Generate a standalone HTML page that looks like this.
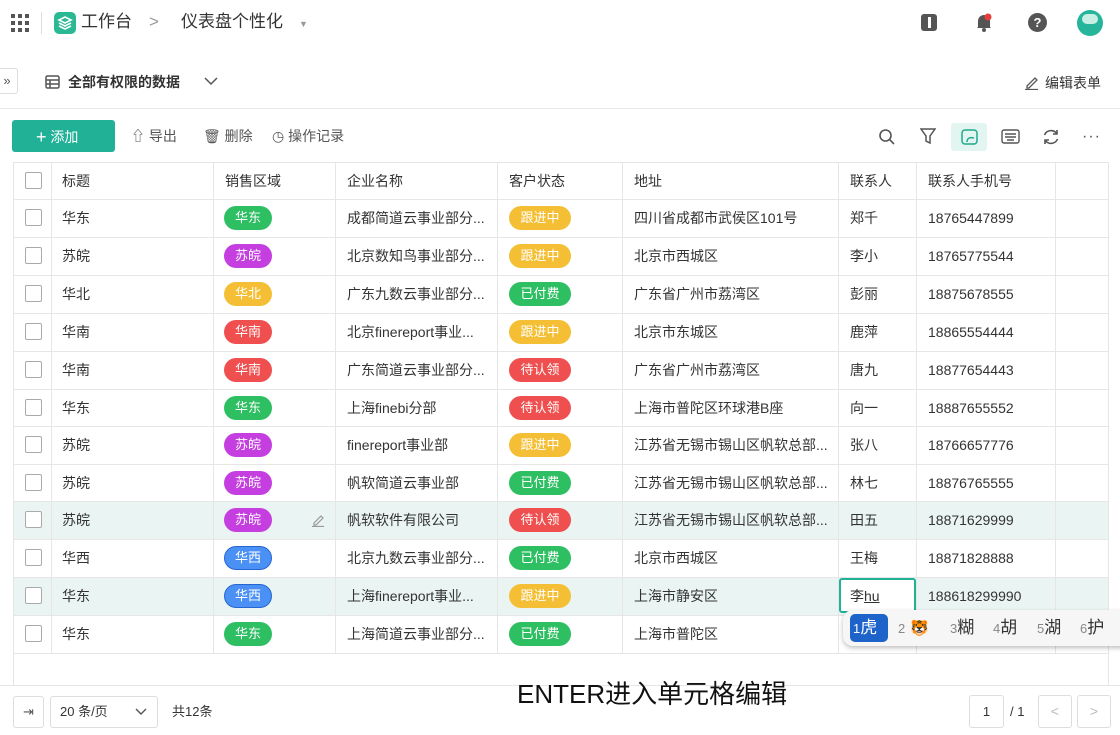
<!DOCTYPE html>
<html><head><meta charset="utf-8"><style>
*{box-sizing:border-box;margin:0;padding:0}
body{width:1120px;height:735px;overflow:hidden;background:#fff;font-family:"Liberation Sans","Noto Sans CJK SC",sans-serif;color:#333;position:relative;font-size:14px}
.a{position:absolute}
.t{position:absolute;white-space:nowrap;line-height:20px}
.tag{position:absolute;height:24px;border-radius:12px;color:#fff;font-size:13px;line-height:24px;text-align:center;width:48px}
.g{background:#2fbf63}.p{background:#c53ee0}.y{background:#f4bf35}.r{background:#ef4f4f}.b{background:#4b90f4;border:1.5px solid #2566d1;line-height:21px}
.st{width:62px}
.cb{position:absolute;left:25px;width:17px;height:17px;border:1px solid #aaa;border-radius:2px;background:#fff}
.vl{position:absolute;top:162px;height:492px;width:1px;background:#e6e6e6}
.hl{position:absolute;left:13px;width:1096px;height:1px;background:#e6e6e6}
.ic{color:#555}
</style></head><body>
<svg class="a" style="left:11px;top:14px" width="18" height="18" viewBox="0 0 18 18" fill="#555"><rect x="0" y="0" width="4" height="4"/><rect x="7" y="0" width="4" height="4"/><rect x="14" y="0" width="4" height="4"/><rect x="0" y="7" width="4" height="4"/><rect x="7" y="7" width="4" height="4"/><rect x="14" y="7" width="4" height="4"/><rect x="0" y="14" width="4" height="4"/><rect x="7" y="14" width="4" height="4"/><rect x="14" y="14" width="4" height="4"/></svg>
<div class="a" style="left:41px;top:12px;width:1px;height:22px;background:#ddd"></div>
<div class="a" style="left:54px;top:12px;width:22px;height:22px;border-radius:5px;background:#2bb894"></div>
<svg class="a" style="left:57px;top:15px" width="16" height="16" viewBox="0 0 16 16" fill="none" stroke="#fff" stroke-width="1.6"><path d="M8 2 L14 5 L8 8 L2 5 Z"/><path d="M2 8 L8 11 L14 8"/><path d="M2 11 L8 14 L14 11"/></svg>
<div class="t" style="left:81px;top:10px;font-size:17px;line-height:24px;color:#333">工作台</div>
<div class="t" style="left:149px;top:10px;font-size:17px;line-height:24px;color:#999">&gt;</div>
<div class="t" style="left:181px;top:10px;font-size:17px;line-height:24px;color:#333">仪表盘个性化</div>
<div class="t" style="left:299px;top:14px;font-size:9px;color:#999">▼</div>
<div class="a" style="left:921px;top:14px;width:16px;height:17px;border-radius:3px;background:#555"></div>
<div class="a" style="left:928px;top:17px;width:3px;height:11px;background:#fff"></div>
<svg class="a" style="left:975px;top:12px" width="18" height="20" viewBox="0 0 18 20"><path d="M3 15 L3 9 A6 6 0 0 1 15 9 L15 15 L16 16 L2 16 Z" fill="#555"/><circle cx="9" cy="18" r="2" fill="#555"/><circle cx="13" cy="5" r="3.5" fill="#e83c3c"/></svg>
<div class="a" style="left:1028px;top:13px;width:19px;height:19px;border-radius:50%;background:#555;color:#fff;font-size:13px;font-weight:bold;text-align:center;line-height:19px">?</div>
<div class="a" style="left:1077px;top:10px;width:26px;height:26px;border-radius:50%;background:#26b49a"></div>
<div class="a" style="left:1082px;top:14px;width:16px;height:10px;border-radius:6px;background:#c9eee4"></div>
<div class="a" style="left:-4px;top:68px;width:22px;height:26px;border:1px solid #ddd;border-radius:3px;background:#fff;font-size:13px;color:#555;text-align:center;line-height:24px">»</div>
<svg class="a" style="left:45px;top:75px" width="15" height="14" viewBox="0 0 15 14" fill="none" stroke="#555" stroke-width="1.5"><rect x="1" y="1" width="13" height="12" rx="1.5"/><path d="M1 5H14M1 9H14M5 5V13"/></svg>
<div class="t" style="left:68px;top:72px;font-size:14px;font-weight:bold;color:#333">全部有权限的数据</div>
<svg class="a" style="left:204px;top:77px" width="14" height="9" viewBox="0 0 14 9" fill="none" stroke="#555" stroke-width="1.5"><path d="M1 1 L7 7 L13 1"/></svg>
<svg class="a" style="left:1024px;top:75px" width="15" height="15" viewBox="0 0 15 15" fill="none" stroke="#555" stroke-width="1.3"><path d="M3 11 L11 3 L13 5 L5 13 L3 13 Z M1 14.5 H14"/></svg>
<div class="t" style="left:1045px;top:73px;font-size:14px;color:#333">编辑表单</div>
<div class="a" style="left:0;top:108px;width:1120px;height:1px;background:#e8e8e8"></div>
<div class="a" style="left:12px;top:120px;width:103px;height:32px;border-radius:3px;background:#20b197;color:#fff;font-size:14px;line-height:32px;padding-left:24px"><span style="font-size:18px;position:relative;top:1px">+</span> 添加</div>
<div class="t ic" style="left:131px;top:126px;font-size:14px">⇧ 导出</div>
<div class="t ic" style="left:203px;top:126px;font-size:14px">🗑︎ 删除</div>
<div class="t ic" style="left:272px;top:126px;font-size:14px">◷ 操作记录</div>
<svg class="a" style="left:878px;top:128px" width="18" height="18" viewBox="0 0 18 18" fill="none" stroke="#555" stroke-width="1.6"><circle cx="7.5" cy="7.5" r="5.5"/><path d="M11.5 11.5 L16 16"/></svg>
<svg class="a" style="left:920px;top:128px" width="16" height="17" viewBox="0 0 16 17" fill="none" stroke="#555" stroke-width="1.5"><path d="M1 1 H15 L10 8 V15 L6 13 V8 Z"/></svg>
<div class="a" style="left:951px;top:123px;width:36px;height:28px;border-radius:3px;background:#e2f5f1"></div>
<svg class="a" style="left:961px;top:129px" width="17" height="16" viewBox="0 0 17 16" fill="none" stroke="#20a98e" stroke-width="1.5"><rect x="1" y="1" width="15" height="14" rx="3"/><path d="M6 13 C6 9 9 8 13 9"/></svg>
<svg class="a" style="left:1001px;top:129px" width="19" height="15" viewBox="0 0 19 15" fill="none" stroke="#555" stroke-width="1.4"><rect x="1" y="1" width="17" height="13" rx="2"/><path d="M4 5H15M4 8H15M6 11H13"/></svg>
<svg class="a" style="left:1042px;top:128px" width="18" height="18" viewBox="0 0 18 18" fill="none" stroke="#555" stroke-width="1.6"><path d="M2.5 7 A7 7 0 0 1 15 6"/><path d="M15.5 11 A7 7 0 0 1 3 12"/><path d="M15 2 V6 H11"/><path d="M3 16 V12 H7"/></svg>
<div class="t" style="left:1082px;top:127px;font-size:16px;color:#555;letter-spacing:1px">···</div>
<div class="a" style="left:13px;top:501px;width:1096px;height:38px;background:#eaf5f3"></div>
<div class="a" style="left:13px;top:577px;width:1096px;height:38px;background:#eaf5f3"></div>
<div class="a" style="left:13px;top:162px;width:1px;height:523px;background:#e6e6e6"></div>
<div class="a" style="left:1108px;top:162px;width:1px;height:523px;background:#e6e6e6"></div>
<div class="vl" style="left:51px"></div><div class="vl" style="left:213px"></div><div class="vl" style="left:335px"></div><div class="vl" style="left:497px"></div><div class="vl" style="left:622px"></div><div class="vl" style="left:838px"></div><div class="vl" style="left:916px"></div><div class="vl" style="left:1055px"></div>
<div class="hl" style="top:162px"></div><div class="hl" style="top:199px"></div><div class="hl" style="top:237px"></div><div class="hl" style="top:275px"></div><div class="hl" style="top:313px"></div><div class="hl" style="top:351px"></div><div class="hl" style="top:389px"></div><div class="hl" style="top:426px"></div><div class="hl" style="top:464px"></div><div class="hl" style="top:501px"></div><div class="hl" style="top:539px"></div><div class="hl" style="top:577px"></div><div class="hl" style="top:615px"></div><div class="hl" style="top:653px"></div>
<div class="a" style="left:0;top:685px;width:1120px;height:1px;background:#e6e6e6"></div>
<div class="cb" style="top:172px"></div>
<div class="t" style="left:62px;top:171px;color:#333">标题</div>
<div class="t" style="left:225px;top:171px">销售区域</div>
<div class="t" style="left:347px;top:171px">企业名称</div>
<div class="t" style="left:509px;top:171px">客户状态</div>
<div class="t" style="left:634px;top:171px">地址</div>
<div class="t" style="left:850px;top:171px">联系人</div>
<div class="t" style="left:928px;top:171px">联系人手机号</div>
<div id="rows"></div>
<script>
var d=[
["华东","g","华东","成都简道云事业部分...","y","跟进中","四川省成都市武侯区101号","郑千","18765447899"],
["苏皖","p","苏皖","北京数知鸟事业部分...","y","跟进中","北京市西城区","李小","18765775544"],
["华北","y","华北","广东九数云事业部分...","g","已付费","广东省广州市荔湾区","彭丽","18875678555"],
["华南","r","华南","北京finereport事业...","y","跟进中","北京市东城区","鹿萍","18865554444"],
["华南","r","华南","广东简道云事业部分...","r","待认领","广东省广州市荔湾区","唐九","18877654443"],
["华东","g","华东","上海finebi分部","r","待认领","上海市普陀区环球港B座","向一","18887655552"],
["苏皖","p","苏皖","finereport事业部","y","跟进中","江苏省无锡市锡山区帆软总部...","张八","18766657776"],
["苏皖","p","苏皖","帆软简道云事业部","g","已付费","江苏省无锡市锡山区帆软总部...","林七","18876765555"],
["苏皖","p","苏皖","帆软软件有限公司","r","待认领","江苏省无锡市锡山区帆软总部...","田五","18871629999"],
["华西","b","华西","北京九数云事业部分...","g","已付费","北京市西城区","王梅","18871828888"],
["华东","b","华西","上海finereport事业...","y","跟进中","上海市静安区","","188618299990"],
["华东","g","华东","上海简道云事业部分...","g","已付费","上海市普陀区","",""]];
var tops=[199,237,275,313,351,389,426,464,501,539,577,615],h="";
d.forEach(function(r,i){var y=tops[i],ty=y+9;
h+='<div class="cb" style="top:'+(y+10)+'px"></div>';
h+='<div class="t" style="left:62px;top:'+ty+'px">'+r[0]+'</div>';
h+='<div class="tag '+r[1]+'" style="left:224px;top:'+(y+7)+'px">'+r[2]+'</div>';
h+='<div class="t" style="left:347px;top:'+ty+'px">'+r[3]+'</div>';
h+='<div class="tag st '+r[4]+'" style="left:509px;top:'+(y+7)+'px">'+r[5]+'</div>';
h+='<div class="t" style="left:634px;top:'+ty+'px">'+r[6]+'</div>';
h+='<div class="t" style="left:850px;top:'+ty+'px">'+r[7]+'</div>';
h+='<div class="t" style="left:928px;top:'+ty+'px">'+r[8]+'</div>';});
document.getElementById('rows').innerHTML=h;
</script>
<svg class="a" style="left:311px;top:513px" width="14" height="14" viewBox="0 0 14 14" fill="none" stroke="#999" stroke-width="1.2"><path d="M3 10 L10 3 L12 5 L5 12 L3 12 Z M1 13.5 H13"/></svg>
<div class="a" style="left:839px;top:578px;width:77px;height:35px;border:2px solid #20b197;border-radius:3px;background:#fff"></div>
<div class="t" style="left:850px;top:586px">李<span style="text-decoration:underline">hu</span></div>
<div class="a" style="left:843px;top:610px;width:290px;height:36px;border-radius:10px;background:#f6f6f6;box-shadow:0 2px 5px rgba(0,0,0,.25)"></div>
<div class="a" style="left:850px;top:614px;width:38px;height:28px;border-radius:5px;background:#1e63c9"></div>
<div class="t" style="left:853px;top:617px;font-size:17px;line-height:22px;color:#fff"><span style="font-size:13px">1</span>虎</div>
<div class="t" style="left:898px;top:617px;font-size:17px;line-height:22px;color:#333"><span style="font-size:13px;color:#888">2</span> <span style="font-size:15px">🐯</span></div>
<div class="t" style="left:950px;top:617px;font-size:17px;line-height:22px;color:#333"><span style="font-size:13px;color:#888">3</span>糊</div>
<div class="t" style="left:993px;top:617px;font-size:17px;line-height:22px;color:#333"><span style="font-size:13px;color:#888">4</span>胡</div>
<div class="t" style="left:1037px;top:617px;font-size:17px;line-height:22px;color:#333"><span style="font-size:13px;color:#888">5</span>湖</div>
<div class="t" style="left:1080px;top:617px;font-size:17px;line-height:22px;color:#333"><span style="font-size:13px;color:#888">6</span>护</div>
<div class="a" style="left:13px;top:696px;width:31px;height:32px;border:1px solid #ddd;border-radius:3px;font-size:13px;color:#555;text-align:center;line-height:30px">⇥</div>
<div class="a" style="left:50px;top:696px;width:108px;height:32px;border:1px solid #ddd;border-radius:3px;font-size:13px;color:#333;line-height:30px;padding-left:9px">20 条/页</div>
<svg class="a" style="left:135px;top:708px" width="12" height="8" viewBox="0 0 12 8" fill="none" stroke="#555" stroke-width="1.4"><path d="M1 1 L6 6 L11 1"/></svg>
<div class="t" style="left:172px;top:702px;font-size:13px">共12条</div>
<div class="t" style="left:517px;top:677px;font-size:26px;line-height:34px;color:#111">ENTER进入单元格编辑</div>
<div class="a" style="left:969px;top:695px;width:35px;height:33px;border:1px solid #ddd;border-radius:3px;font-size:13px;text-align:center;line-height:31px">1</div>
<div class="t" style="left:1010px;top:702px;font-size:13px">/ 1</div>
<div class="a" style="left:1038px;top:695px;width:34px;height:33px;border:1px solid #ddd;border-radius:3px;color:#bbb;text-align:center;line-height:31px">&lt;</div>
<div class="a" style="left:1077px;top:695px;width:34px;height:33px;border:1px solid #ddd;border-radius:3px;color:#bbb;text-align:center;line-height:31px">&gt;</div>
</body></html>
